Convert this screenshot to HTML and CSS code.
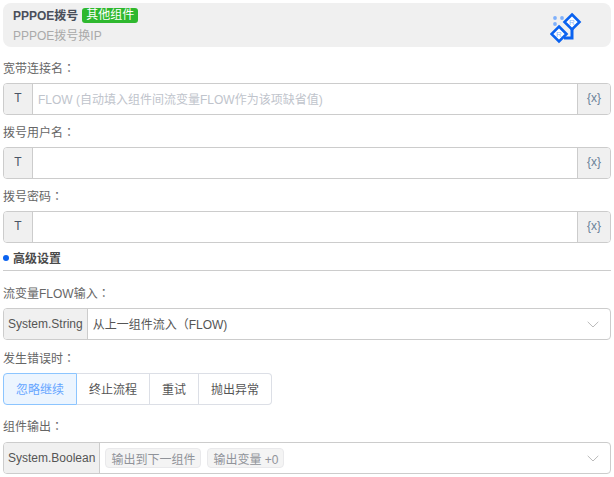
FILE: index.html
```html
<!DOCTYPE html>
<html lang="zh">
<head>
<meta charset="utf-8">
<title>PPPOE拨号</title>
<link rel="stylesheet" href="styles.css">
</head>
<body>
<div class="form">
  <header class="head">
    <div class="head-text">
      <div class="head-title"><span>PPPOE拨号</span><span class="tag">其他组件</span></div>
      <div class="head-desc">PPPOE拨号换IP</div>
    </div>
    <svg class="logo" width="32" height="32" viewBox="0 0 32 32">
      <circle cx="5" cy="6" r="1.9" fill="#7fb0fb"/>
      <circle cx="12" cy="6" r="1.9" fill="#7fb0fb"/>
      <circle cx="5" cy="12" r="1.9" fill="#7fb0fb"/>
      <path d="M22 17v9H14" fill="none" stroke="#0a62f0" stroke-width="3"/>
      <path d="M22 2.500l7.500 7.500-7.500 7.500-7.500-7.500z" fill="#fff" stroke="#0a62f0" stroke-width="2.600"/>
      <path d="M9 14.500l7.500 7.500-7.500 7.500-7.500-7.500z" fill="#fff" stroke="#0a62f0" stroke-width="2.600"/>
      <text x="22" y="13" class="logo-r">R</text>
      <text x="9" y="25" class="logo-r">R</text>
    </svg>
  </header>

  <div class="field first">
    <label class="label">宽带连接名<span class="colon" lang="zh-TW">：</span></label>
    <div class="group">
      <span class="addon t">T</span>
      <span class="value placeholder">FLOW (自动填入组件间流变量FLOW作为该项缺省值)</span>
      <span class="addon x">{x}</span>
    </div>
  </div>
  <div class="field">
    <label class="label">拨号用户名<span class="colon" lang="zh-TW">：</span></label>
    <div class="group">
      <span class="addon t">T</span>
      <span class="value"></span>
      <span class="addon x">{x}</span>
    </div>
  </div>
  <div class="field">
    <label class="label">拨号密码<span class="colon" lang="zh-TW">：</span></label>
    <div class="group">
      <span class="addon t">T</span>
      <span class="value"></span>
      <span class="addon x">{x}</span>
    </div>
  </div>

  <div class="section"><i class="dot"></i>高级设置</div>

  <div class="field sec-first">
    <label class="label">流变量FLOW输入<span class="colon" lang="zh-TW">：</span></label>
    <div class="group">
      <span class="addon type">System.String</span>
      <span class="value filled">从上一组件流入（FLOW)</span>
      <svg class="chev" width="12" height="7" viewBox="0 0 12 7"><path d="M.7.8L6 6l5.300-5.200" fill="none" stroke="#bbb" stroke-width="1"/></svg>
    </div>
  </div>
  <div class="field err">
    <label class="label">发生错误时<span class="colon" lang="zh-TW">：</span></label>
    <div class="btns">
      <span class="btn on">忽略继续</span>
      <span class="btn">终止流程</span>
      <span class="btn">重试</span>
      <span class="btn">抛出异常</span>
    </div>
  </div>
  <div class="field out">
    <label class="label">组件输出<span class="colon" lang="zh-TW">：</span></label>
    <div class="group">
      <span class="addon type">System.Boolean</span>
      <span class="chips"><span class="chip">输出到下一组件</span><span class="chip">输出变量 +0</span></span>
      <svg class="chev" width="12" height="7" viewBox="0 0 12 7"><path d="M.7.8L6 6l5.300-5.200" fill="none" stroke="#bbb" stroke-width="1"/></svg>
    </div>
  </div>
</div>
</body>
</html>
```
FILE: styles.css
```css
* { box-sizing: border-box; }
html, body { margin: 0; padding: 0; background: #fff; }
body {
  font-family: "Liberation Sans", "Noto Sans CJK SC", sans-serif;
  font-size: 12px;
  color: #555;
}
.form { width: 614px; height: 477px; padding: 3px 3px 0; overflow: hidden; }
.head {
  height: 44px;
  background: #f0f0f0;
  border-radius: 8px;
  padding: 0 10px;
  display: flex;
  align-items: center;
  justify-content: space-between;
}
.head-text { display: flex; flex-direction: column; gap: 5px; }
.head-title { display: flex; align-items: center; gap: 4px; font-weight: 700; color: #4a4f5a; line-height: 16px; }
.tag {
  background: #2eb82e;
  color: #fff;
  font-weight: 400;
  border-radius: 3px;
  padding: 0 4px;
  height: 15px;
  line-height: 15px;
}
.head-desc { color: #aaa; line-height: 14px; }
.logo { margin-right: 19px; margin-top: 6px; }
.logo-r { font-size: 8px; fill: #8ab6fb; text-anchor: middle; font-family: "Liberation Sans", sans-serif; }
.field { display: flex; flex-direction: column; gap: 7px; margin-top: 9px; }
.field.first { margin-top: 13px; }
.field.sec-first { margin-top: 14px; }
.field.err { margin-top: 10px; }
.field.out { margin-top: 13px; gap: 8px; }
.label { display: block; height: 16px; line-height: 16px; color: #666; }
.colon { font-family: "Noto Sans CJK TC", sans-serif; }
.group {
  height: 32px;
  display: flex;
  align-items: stretch;
  border: 1px solid #ccc;
  border-radius: 4px;
  overflow: hidden;
  position: relative;
}
.addon {
  background: #f0f0f0;
  display: flex;
  align-items: center;
  justify-content: center;
  flex: none;
}
.addon.t { width: 29px; border-right: 1px solid #ccc; color: #4a5565; padding-bottom: 2px; }
.addon.x { width: 33px; border-left: 1px solid #ccc; color: #6b8299; padding-bottom: 2px; }
.addon.type { padding: 0 4px; border-right: 1px solid #ccc; color: #555; }
.value { flex: 1; display: flex; align-items: center; padding: 0 5px 2px; }
.placeholder { color: #c0c4cc; }
.filled { color: #555; }
.chev { position: absolute; right: 11px; top: 12px; }
.section {
  display: flex;
  align-items: center;
  height: 26px;
  margin-top: 2px;
  border-bottom: 1px solid #ccc;
  font-weight: 700;
  color: #4a4a4a;
  gap: 4px;
}
.dot { width: 6px; height: 6px; border-radius: 50%; background: #0a62f0; }
.btns { display: flex; height: 32px; width: max-content; }
.btn {
  display: flex;
  align-items: center;
  justify-content: center;
  padding: 0 12px 2px;
  border: 1px solid #dcdfe6;
  border-left: 0;
  background: #fff;
  color: #555;
}
.btn:first-child { border-left: 1px solid #8cc5ff; border-radius: 4px 0 0 4px; }
.btn:last-child { border-radius: 0 4px 4px 0; }
.btn.on { background: #ecf5ff; color: #66a6ff; border-color: #8cc5ff; }
.chips { flex: 1; display: flex; align-items: center; gap: 6px; padding: 0 5px; }
.chip {
  height: 20px;
  display: flex;
  align-items: center;
  padding: 0 5px;
  background: #f4f4f4;
  border: 1px solid #e9e9eb;
  border-radius: 4px;
  color: #909399;
}
```
